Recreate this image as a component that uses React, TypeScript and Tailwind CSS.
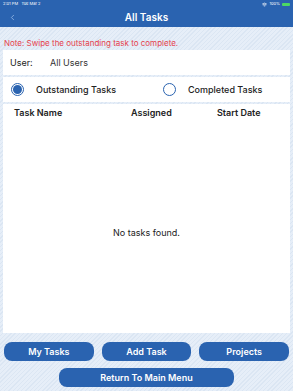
import { ChevronLeft, Wifi } from "lucide-react";

const FONT = "font-['Inter','Noto_Sans',sans-serif]";

function Radio({ checked, label }: { checked: boolean; label: string }) {
  return (
    <div className="flex items-center gap-[12px]">
      <div className="w-[13px] h-[13px] rounded-full border border-[#2a63b0] flex items-center justify-center bg-white">
        {checked && <div className="w-[9px] h-[9px] rounded-full bg-[#2a63b0]" />}
      </div>
      <span className="text-[9px] font-medium text-[#222]">{label}</span>
    </div>
  );
}

export default function App() {
  return (
    <div
      className={`${FONT} w-[293px] h-[391px] flex flex-col bg-[#dfe9f5] bg-[repeating-linear-gradient(135deg,#dbe6f3_0px,#dbe6f3_1px,#e6eef8_1px,#e6eef8_3px)] overflow-hidden`}
    >
      {/* Header */}
      <div className="bg-[#2a63b0] h-[27px] flex flex-col">
        <div className="h-[8px] flex items-center justify-between px-[3px] text-white text-[4px] leading-none">
          <span>2:01 PM&nbsp;&nbsp;&nbsp;Tue Mar 2</span>
          <div className="flex items-center gap-[2px]">
            <Wifi size={5} strokeWidth={3} />
            <span>100%</span>
            <div className="w-[8px] h-[3px] bg-[#4cd964] rounded-[1px]" />
          </div>
        </div>
        <div className="flex-1 relative flex items-center justify-center">
          <ChevronLeft size={9} className="absolute left-[8px] text-[#9fc0ea]" strokeWidth={2} />
          <span className="text-white text-[10px] font-semibold">All Tasks</span>
        </div>
      </div>

      <div className="pt-[10px] px-[4px] text-[#e5414b] text-[8px] leading-[12px]">
        Note: Swipe the outstanding task to complete.
      </div>

      {/* Card */}
      <div className="mx-[3px] mt-[1px] flex flex-col gap-[2px] h-[283px]">
        <div className="bg-white h-[25px] flex items-center px-[7px] text-[9px] text-[#222]">
          <span className="w-[40px]">User:</span>
          <span className="text-[#333]">All Users</span>
        </div>
        <div className="bg-white h-[25px] flex items-center px-[8px]">
          <div className="w-[152px]">
            <Radio checked label="Outstanding Tasks" />
          </div>
          <Radio checked={false} label="Completed Tasks" />
        </div>
        <div className="bg-white flex-1 flex flex-col">
          <div className="flex items-center h-[16px] pt-[1px] text-[9px] font-semibold text-[#222]">
            <span className="pl-[11px] w-[128px]">Task Name</span>
            <span className="w-[86px]">Assigned</span>
            <span>Start Date</span>
          </div>
          <div className="flex-1 flex items-center justify-center pt-[12px]">
            <span className="text-[9px] text-[#222]">No tasks found.</span>
          </div>
        </div>
      </div>

      {/* Buttons */}
      <div className="flex gap-[8px] px-[4px] mt-[9px]">
        {["My Tasks", "Add Task", "Projects"].map((t) => (
          <button
            key={t}
            className="flex-1 h-[19px] rounded-[8px] bg-[#2a63b0] text-white text-[9px] font-semibold"
          >
            {t}
          </button>
        ))}
      </div>
      <div className="flex justify-center mt-[7px]">
        <button className="w-[175px] h-[19px] rounded-[8px] bg-[#2a63b0] text-white text-[9px] font-semibold">
          Return To Main Menu
        </button>
      </div>
    </div>
  );
}
